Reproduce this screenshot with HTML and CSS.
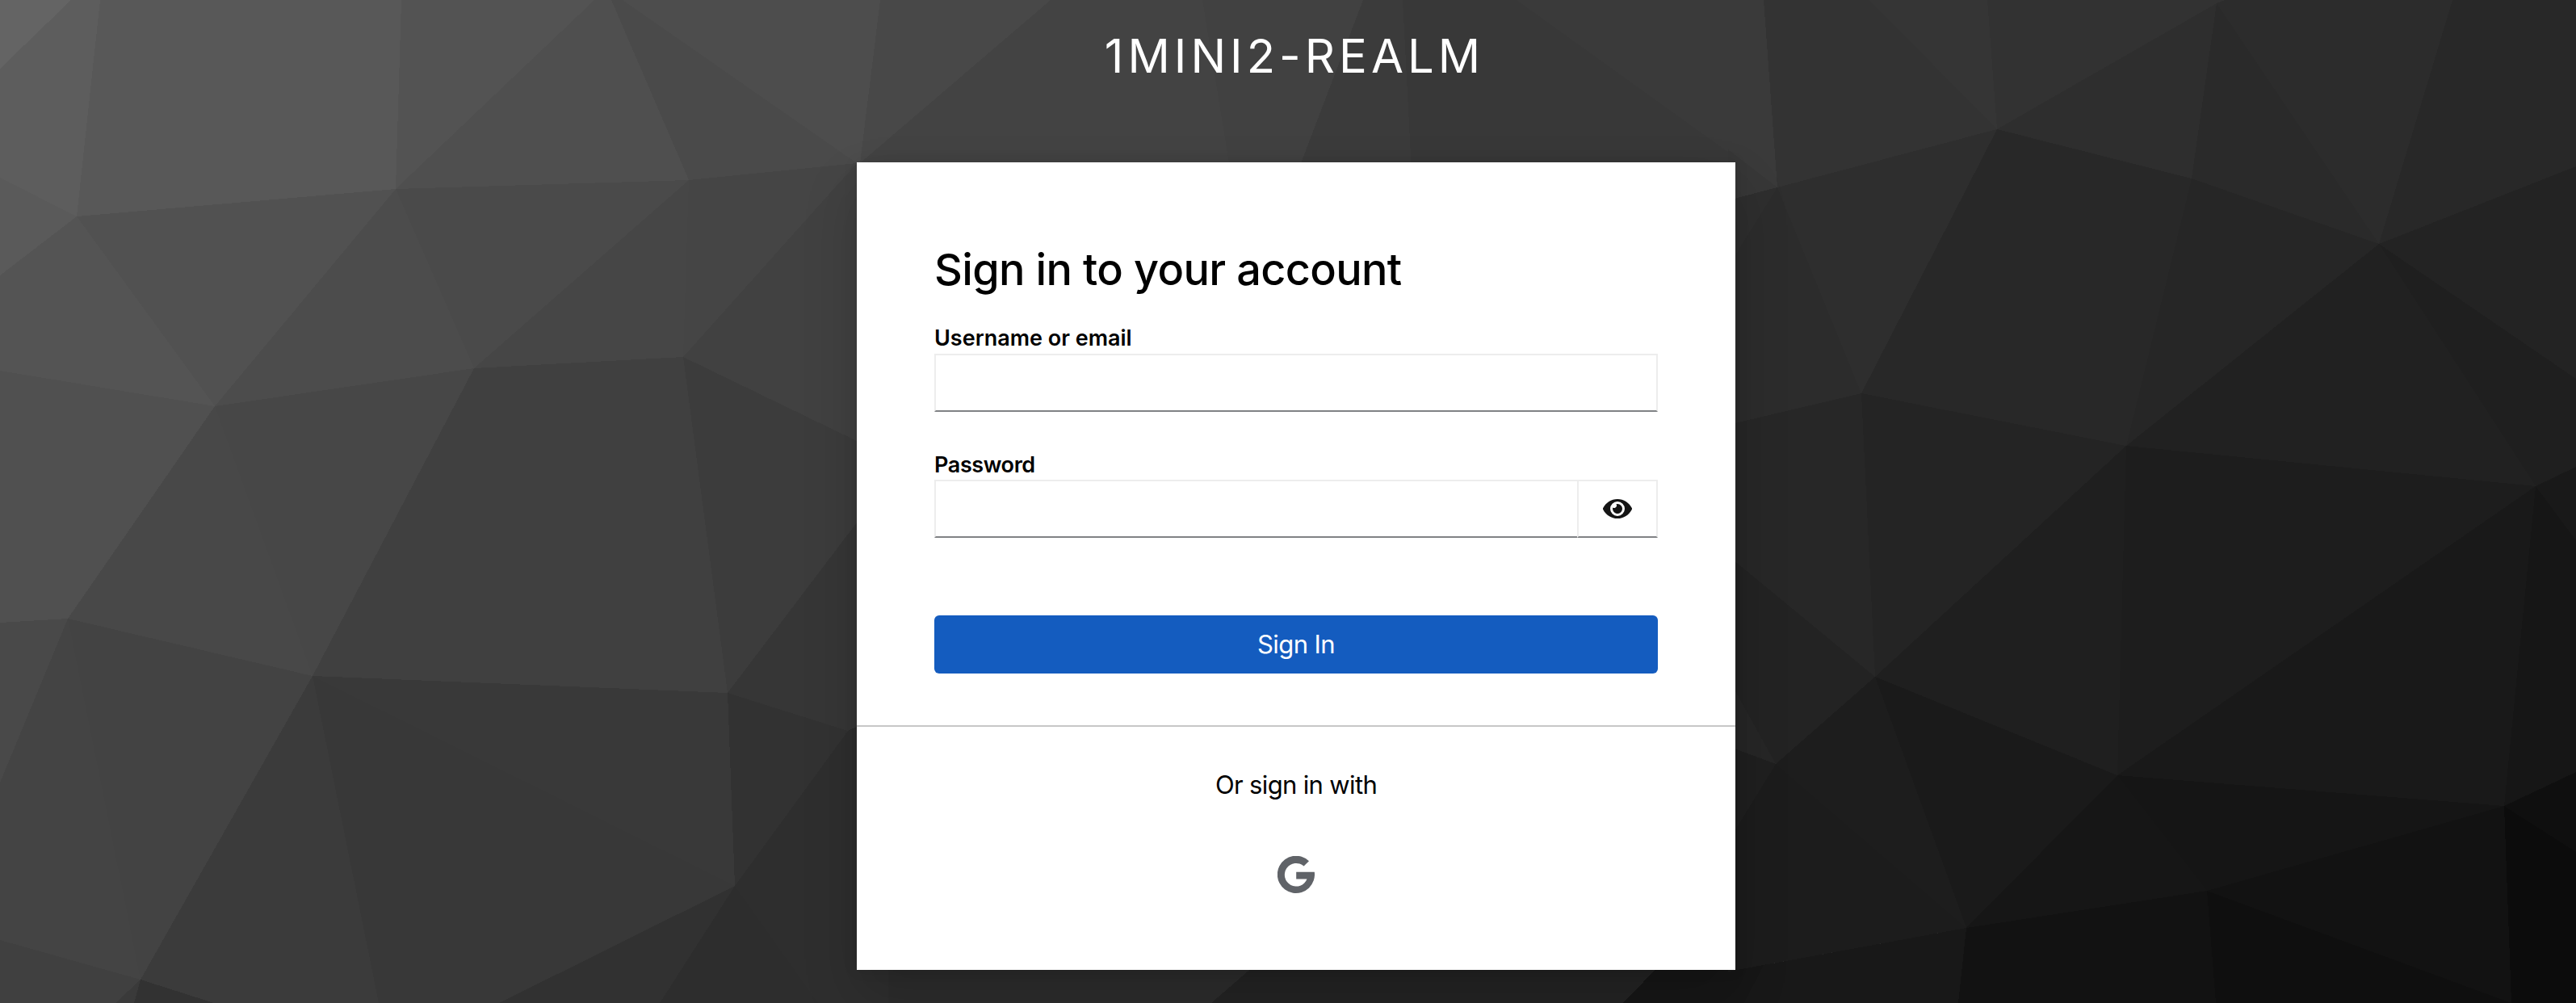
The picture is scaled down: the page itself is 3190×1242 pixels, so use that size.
FILE: index.html
```html
<!DOCTYPE html>
<html lang="en">
<head>
<meta charset="utf-8">
<title>Sign in to 1mini2-realm</title>
<link rel="stylesheet" href="styles.css">
</head>
<body>
<svg class="backdrop" viewBox="0 0 3190 1242" preserveAspectRatio="none" aria-hidden="true">
  <rect width="3190" height="1242" fill="#2b2b2b"/>
  <!-- left side facets -->
  <polygon points="0,0 88,0 0,85" fill="#646464"/>
  <polygon points="88,0 124,0 95,268 0,220 0,85" fill="#5d5d5d"/>
  <polygon points="0,220 95,268 0,341" fill="#5a5a5a"/>
  <polygon points="124,0 497,0 490,234 95,268" fill="#585858"/>
  <polygon points="497,0 736,0 490,234" fill="#535353"/>
  <polygon points="736,0 757,0 853,223 490,234" fill="#4f4f4f"/>
  <polygon points="757,0 771,0 1061,202 853,223" fill="#4a4a4a"/>
  <polygon points="771,0 1090,0 1065,202 1061,202" fill="#4d4d4d"/>
  <polygon points="95,268 490,234 266,503" fill="#515151"/>
  <polygon points="0,341 95,268 266,503 0,459" fill="#545454"/>
  <polygon points="490,234 587,456 266,503" fill="#4c4c4c"/>
  <polygon points="490,234 853,223 587,456" fill="#4a4a4a"/>
  <polygon points="853,223 846,442 587,456" fill="#464646"/>
  <polygon points="853,223 1061,202 846,442" fill="#454545"/>
  <polygon points="1061,202 1100,202 1100,574 846,442" fill="#414141"/>
  <polygon points="0,459 266,503 84,766 0,771" fill="#505050"/>
  <polygon points="266,503 387,837 84,766" fill="#484848"/>
  <polygon points="266,503 587,456 387,837" fill="#474747"/>
  <polygon points="587,456 846,442 901,858 387,837" fill="#404040"/>
  <polygon points="846,442 1061,546 1061,647 901,858" fill="#3c3c3c"/>
  <polygon points="901,858 1061,647 1061,900 1050,905" fill="#363636"/>
  <polygon points="901,858 1050,905 910,1097" fill="#323232"/>
  <polygon points="387,837 901,858 910,1097" fill="#393939"/>
  <polygon points="387,837 910,1097 618,1242 469,1242" fill="#383838"/>
  <polygon points="387,837 469,1242 265,1242 174,1213" fill="#3b3b3b"/>
  <polygon points="84,766 387,837 174,1213" fill="#434343"/>
  <polygon points="0,771 84,766 0,969" fill="#494949"/>
  <polygon points="84,766 174,1213 0,1164 0,969" fill="#444444"/>
  <polygon points="0,1164 174,1213 143,1242 0,1242" fill="#404040"/>
  <polygon points="174,1213 166,1242 143,1242" fill="#3a3a3a"/>
  <polygon points="174,1213 265,1242 166,1242" fill="#323232"/>
  <polygon points="910,1097 817,1242 618,1242" fill="#313131"/>
  <polygon points="910,1097 1013,1242 817,1242" fill="#2d2d2d"/>
  <polygon points="1050,905 1100,890 1100,1242 1013,1242 910,1097" fill="#2e2e2e"/>
  <!-- facets above and below the card -->
  <polygon points="1090,0 1301,0 1065,202" fill="#484848"/>
  <polygon points="1301,0 1489,0 1522,202 1065,202" fill="#434343"/>
  <polygon points="1489,0 1688,0 1611,202 1522,202" fill="#414141"/>
  <polygon points="1688,0 1737,0 1749,202 1611,202" fill="#3b3b3b"/>
  <polygon points="1737,0 1878,0 2201,232 1749,232" fill="#383838"/>
  <polygon points="1878,0 2184,0 2201,232" fill="#3a3a3a"/>
  <polygon points="1100,1190 1560,1190 1500,1242 1100,1242" fill="#2c2c2c"/>
  <polygon points="1560,1190 2060,1190 2010,1242 1500,1242" fill="#232323"/>
  <polygon points="2060,1190 2190,1190 2160,1242 2010,1242" fill="#161616"/>
  <!-- right side facets -->
  <polygon points="2140,185 2201,232 2140,248" fill="#373737"/>
  <polygon points="2201,232 2140,248 2140,330" fill="#2e2e2e"/>
  <polygon points="2184,0 2315,0 2473,160 2201,232" fill="#333333"/>
  <polygon points="2315,0 2461,0 2473,160" fill="#353535"/>
  <polygon points="2461,0 2755,0 2745,4 2473,160" fill="#323232"/>
  <polygon points="2473,160 2745,4 2714,221" fill="#2e2e2e"/>
  <polygon points="2745,4 2946,302 2714,221" fill="#2a2a2a"/>
  <polygon points="2745,4 2755,0 3037,0 2946,302" fill="#2c2c2c"/>
  <polygon points="3037,0 3190,0 3190,206 2946,302" fill="#282828"/>
  <polygon points="2201,232 2305,487 2140,526 2140,330" fill="#2c2c2c"/>
  <polygon points="2201,232 2473,160 2305,487" fill="#2e2e2e"/>
  <polygon points="2473,160 2714,221 2633,552 2305,487" fill="#282828"/>
  <polygon points="2714,221 2946,302 2633,552" fill="#262626"/>
  <polygon points="2946,302 3140,602 2633,552" fill="#212121"/>
  <polygon points="2946,302 3190,206 3190,469" fill="#232323"/>
  <polygon points="2946,302 3190,469 3190,578 3140,602" fill="#1f1f1f"/>
  <polygon points="2305,487 2322,838 2140,688 2140,526" fill="#272727"/>
  <polygon points="2305,487 2633,552 2322,838" fill="#242424"/>
  <polygon points="2633,552 2622,960 2322,838" fill="#1f1f1f"/>
  <polygon points="2633,552 3140,602 2622,960" fill="#1d1d1d"/>
  <polygon points="3140,602 3101,998 2622,960" fill="#191919"/>
  <polygon points="3140,602 3190,669 3190,956 3101,998" fill="#161616"/>
  <polygon points="3140,602 3190,578 3190,669" fill="#191919"/>
  <polygon points="2322,838 2199,946 2140,840 2140,688" fill="#232323"/>
  <polygon points="2199,946 2140,840 2140,924" fill="#262626"/>
  <polygon points="2199,946 2140,924 2140,1042" fill="#1f1f1f"/>
  <polygon points="2322,838 2435,1149 2199,946" fill="#1d1d1d"/>
  <polygon points="2322,838 2622,960 2435,1149" fill="#1a1a1a"/>
  <polygon points="2199,946 2435,1149 2140,1203 2140,1042" fill="#1c1c1c"/>
  <polygon points="2622,960 2733,1103 2435,1149" fill="#161616"/>
  <polygon points="2622,960 3101,998 2733,1103" fill="#151515"/>
  <polygon points="2435,1149 2425,1242 2160,1242 2184,1195" fill="#181818"/>
  <polygon points="2435,1149 2733,1103 2744,1242 2425,1242" fill="#121212"/>
  <polygon points="2733,1103 3110,1242 2744,1242" fill="#0f0f0f"/>
  <polygon points="2733,1103 3101,998 3110,1242" fill="#121212"/>
  <polygon points="3101,998 3190,956 3190,1055" fill="#0f0f0f"/>
  <polygon points="3101,998 3190,1055 3190,1242 3110,1242" fill="#0c0c0c"/>
</svg>
<div class="login">
  <header class="realm"><span class="realm-name">1mini2-realm</span></header>
  <main class="card">
    <form class="form" onsubmit="return false">
      <h1 class="title"><span class="title-text">Sign in to your account</span></h1>
      <div class="field">
        <label class="label label-user" for="username">Username or email</label>
        <input class="input" id="username" type="text">
      </div>
      <div class="field">
        <label class="label label-pass" for="password">Password</label>
        <div class="input-group">
          <input class="input" id="password" type="password">
          <button class="reveal" type="button" aria-label="Show password">
            <svg class="eye" viewBox="0 0 576 512"><path d="M572.52 241.4C518.29 135.59 410.93 64 288 64S57.68 135.64 3.48 241.41a32.35 32.35 0 0 0 0 29.19C57.71 376.41 165.07 448 288 448s230.32-71.64 284.52-177.41a32.35 32.35 0 0 0 0-29.19zM288 400a144 144 0 1 1 144-144 143.93 143.93 0 0 1-144 144zm0-240a95.31 95.31 0 0 0-25.31 3.79 47.85 47.85 0 0 1-66.9 66.9A95.78 95.78 0 1 0 288 160z"/></svg>
          </button>
        </div>
      </div>
      <button class="submit" type="submit"><span class="submit-text">Sign In</span></button>
    </form>
    <section class="social">
      <h2 class="social-title">Or sign in with</h2>
      <a class="google" aria-label="Google">
        <svg class="google-icon" viewBox="-23.2 -23.2 46.4 46.4"><path d="M15.8-16.9A23.1 23.1 0 1 0 22.6-3.5H0V5.2H13.3A14.3 14.3 0 1 1 9.4-10.7Z"/></svg>
      </a>
    </section>
  </main>
</div>
</body>
</html>
```
FILE: styles.css
```css
* {
  box-sizing: border-box;
}

body {
  margin: 0;
  height: 1242px;
  overflow: hidden;
  background: #2b2b2b;
  color: #000;
  font-family: Inter, "Open Sans", sans-serif;
}

.backdrop {
  position: absolute;
  inset: 0;
  width: 100%;
  height: 100%;
}

.backdrop polygon {
  shape-rendering: crispEdges;
}

.login {
  position: relative;
  width: 1088px;
  margin-left: 1061px;
}

.realm {
  height: 201px;
  padding: 30px 4px 0 0;
  color: #fff;
  font-size: 58px;
  line-height: 78px;
  letter-spacing: 5px;
  text-align: center;
  text-transform: uppercase;
  white-space: nowrap;
}

.card {
  height: 1000px;
  background: #fff;
  box-shadow: 0 32px 64px 0 rgba(3, 3, 3, .16), 0 0 16px 0 rgba(3, 3, 3, .1);
}

.form {
  display: flex;
  flex-direction: column;
  height: 699px;
  padding: 96px 96px 0;
  border-bottom: 2px solid #c7c7c7;
}

.title {
  margin: 0 0 30px;
  font-size: 54px;
  font-weight: 500;
  line-height: 73px;
  letter-spacing: -.65px;
  white-space: nowrap;
}

.field {
  margin-bottom: 46px;
}

.label {
  display: block;
  width: max-content;
  font-size: 27px;
  font-weight: 600;
  line-height: 38px;
}

.label-pass {
  height: 38px;
  line-height: 40px;
  letter-spacing: -.4px;
}

.input {
  display: block;
  width: 100%;
  height: 72px;
  padding: 0 16px;
  border: 2px solid #ededed;
  border-bottom-color: #808285;
  border-radius: 0;
  background: #fff;
  font: inherit;
  font-size: 32px;
  outline: none;
}

.input-group {
  display: flex;
}

.input-group .input {
  flex: 1;
  min-width: 0;
  border-right: 0;
}

.reveal {
  display: flex;
  align-items: center;
  justify-content: center;
  width: 100px;
  height: 72px;
  padding: 0;
  border: 2px solid #ededed;
  border-bottom-color: #808285;
  background: #fff;
}

.eye {
  width: 36px;
  height: 32px;
  fill: #151515;
}

.submit {
  height: 72px;
  margin-top: 50px;
  padding: 0;
  border: 0;
  border-radius: 6px;
  background: #145cbf;
  color: #fff;
  font: 400 31px/70px Inter, "Open Sans", sans-serif;
  letter-spacing: -.6px;
}

.social {
  display: flex;
  flex-direction: column;
  align-items: center;
  padding-top: 48px;
}

.social-title {
  margin: 0;
  font-size: 31px;
  font-weight: 400;
  line-height: 48px;
  letter-spacing: -.65px;
  white-space: nowrap;
}

.google {
  display: flex;
  margin-top: 64px;
}

.google-icon {
  width: 46.4px;
  height: 46.4px;
  fill: #606368;
}
```
